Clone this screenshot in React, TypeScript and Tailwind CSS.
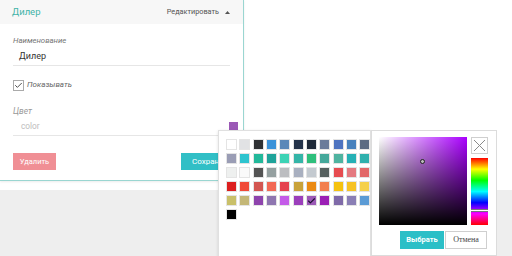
import { Check } from "lucide-react";

const PALETTE: string[] = [
  "#ffffff", "#e1e2e4", "#2f3134", "#3b92d9", "#5b88b8", "#24334a", "#1e2938", "#6a7b9a", "#4f74c0", "#4982bd", "#5c6b82",
  "#9a9db5", "#2ec4cf", "#22b89a", "#1fa39a", "#3dd3b5", "#34b5a8", "#2ebf7c", "#45a89b", "#4fb3a0", "#26b0b5", "#2fb0ad",
  "#eef0ef", "#fafafa", "#545454", "#95a0a0", "#bcbdc0", "#a9b0c0", "#c4cad0", "#56605f", "#e64c50", "#e47a80", "#e26868",
  "#dc1f1f", "#f04a38", "#d35651", "#f26955", "#e5424f", "#c9a23a", "#ea8a14", "#f27f4f", "#f5c210", "#f6c224", "#f5d04a",
  "#c9c06a", "#c4b777", "#8e44ad", "#8e76b0", "#c45be8", "#9b3fbb", "#9b59b6", "#9b1fb5", "#7f6aa8", "#8a7fb5", "#5b9bd5",
  "#000000",
];

const SELECTED = "#9b59b6";

function Swatches() {
  return (
    <div className="grid grid-cols-[repeat(11,11px)] gap-x-[2.33px] gap-y-[3px]">
      {PALETTE.map((c, i) => (
        <div
          key={i}
          className="w-[11px] h-[11px] border border-[#e4e4e4] flex items-center justify-center"
          style={{ backgroundColor: c }}
        >
          {c === SELECTED && <Check size={10} strokeWidth={3} className="text-[#1b1030]" />}
        </div>
      ))}
    </div>
  );
}

function Picker() {
  return (
    <div className="w-[126px] h-[126px] border border-[#dcdcdc] bg-white pt-[6px] pl-[7px] pr-[8px]">
      <div className="flex gap-[4px]">
        <div className="relative w-[88px] h-[88px] bg-[#aa00ff]">
          <div className="absolute inset-0 bg-[linear-gradient(to_right,#ffffff,rgba(255,255,255,0))]" />
          <div className="absolute inset-0 bg-[linear-gradient(to_top,#000000,rgba(0,0,0,0))]" />
          <div className="absolute left-[41px] top-[22px] w-[5px] h-[5px] rounded-full border border-[#222] bg-[#bbb]" />
        </div>
        <div className="flex flex-col gap-[4px]">
          <div className="w-[17px] h-[17px] border border-[#cfcfcf] flex items-center justify-center">
            <svg width="13" height="13" viewBox="0 0 13 13">
              <path d="M1 1 L12 12 M12 1 L1 12" stroke="#8a8a8a" strokeWidth="1" fill="none" />
            </svg>
          </div>
          <div className="relative w-[17px] h-[67px] bg-[linear-gradient(to_bottom,#ff0000,#ffff00,#00ff00,#00ffff,#0000ff,#ff00ff,#ff0000)]">
            <div className="absolute left-0 right-0 top-[51px] h-[3px] bg-white border-y border-[#777]" />
          </div>
        </div>
      </div>
      <div className="flex justify-end gap-[1px] mt-[6px] mr-[1px]">
        <button className="w-[44px] h-[18px] bg-[#2bbfc7] text-white text-[7.5px] font-bold font-['Roboto',sans-serif]">
          Выбрать
        </button>
        <button className="w-[42px] h-[18px] bg-white border border-[#cfcfcf] text-[#444] text-[8px] font-['Liberation_Serif',serif]">
          Отмена
        </button>
      </div>
    </div>
  );
}

export default function App() {
  return (
    <div className="relative w-[512px] h-[256px] overflow-hidden bg-white font-['Roboto',sans-serif]">
      <div className="h-[190px] bg-white">
        <div className="w-[244px] border-r border-b border-[#9ad6d1] bg-white shadow-[0_1px_2px_rgba(0,0,0,0.08)]">
          <div className="h-[24px] bg-[#f7f7f7] flex items-center justify-between pl-[12px] pr-[13px]">
            <span className="text-[9.5px] text-[#3fb3a8]">Дилер</span>
            <span className="flex items-center gap-[6px] text-[7.3px] text-[#555]">
              Редактировать
              <svg width="5" height="3" viewBox="0 0 5 3">
                <path d="M0 3 L2.5 0 L5 3 Z" fill="#555" />
              </svg>
            </span>
          </div>
          <div className="px-[13px] pb-[10px]">
            <div className="mt-[10px] h-[14px] leading-[14px] text-[7.8px] italic text-[#777]">Наименование</div>
            <div className="box-content h-[17px] leading-[17px] border-b border-[#e6e6e6] pl-[6px] text-[9px] text-[#333]">
              Дилер
            </div>
            <div className="mt-[13px] flex items-center gap-[3px] h-[12px]">
              <div className="w-[11px] h-[11px] border border-[#aaa] bg-white flex items-center justify-center">
                <Check size={9} strokeWidth={2.5} className="text-[#444]" />
              </div>
              <span className="text-[8px] italic text-[#666]">Показывать</span>
            </div>
            <div className="mt-[13px] h-[14px] leading-[14px] text-[8.5px] italic text-[#999]">Цвет</div>
            <div className="box-content h-[17px] border-b border-[#e6e6e6] flex items-center justify-between pl-[8px]">
              <span className="text-[8.3px] text-[#bdbdbd]">color</span>
              <div className="w-[9px] h-[9px] bg-[#9b59b6] mr-[-8px]" />
            </div>
            <div className="mt-[17px] flex justify-between">
              <button className="w-[43px] h-[17px] bg-[#f08f95] text-white text-[7.5px]">Удалить</button>
              <button className="w-[62px] h-[17px] bg-[#31bfc6] text-white text-[8px] mr-[-13px] text-left pl-[11px]">Сохранить</button>
            </div>
          </div>
        </div>
      </div>
      <div className="h-[66px] bg-[#eeeeee]" />
      <div className="absolute left-[218px] top-[130px] flex">
        <div className="w-[153px] h-[130px] bg-white border border-[#e0e0e0] shadow-[0_1px_3px_rgba(0,0,0,0.12)] pt-[8px] pl-[7px]">
          <Swatches />
        </div>
        <Picker />
      </div>
    </div>
  );
}
